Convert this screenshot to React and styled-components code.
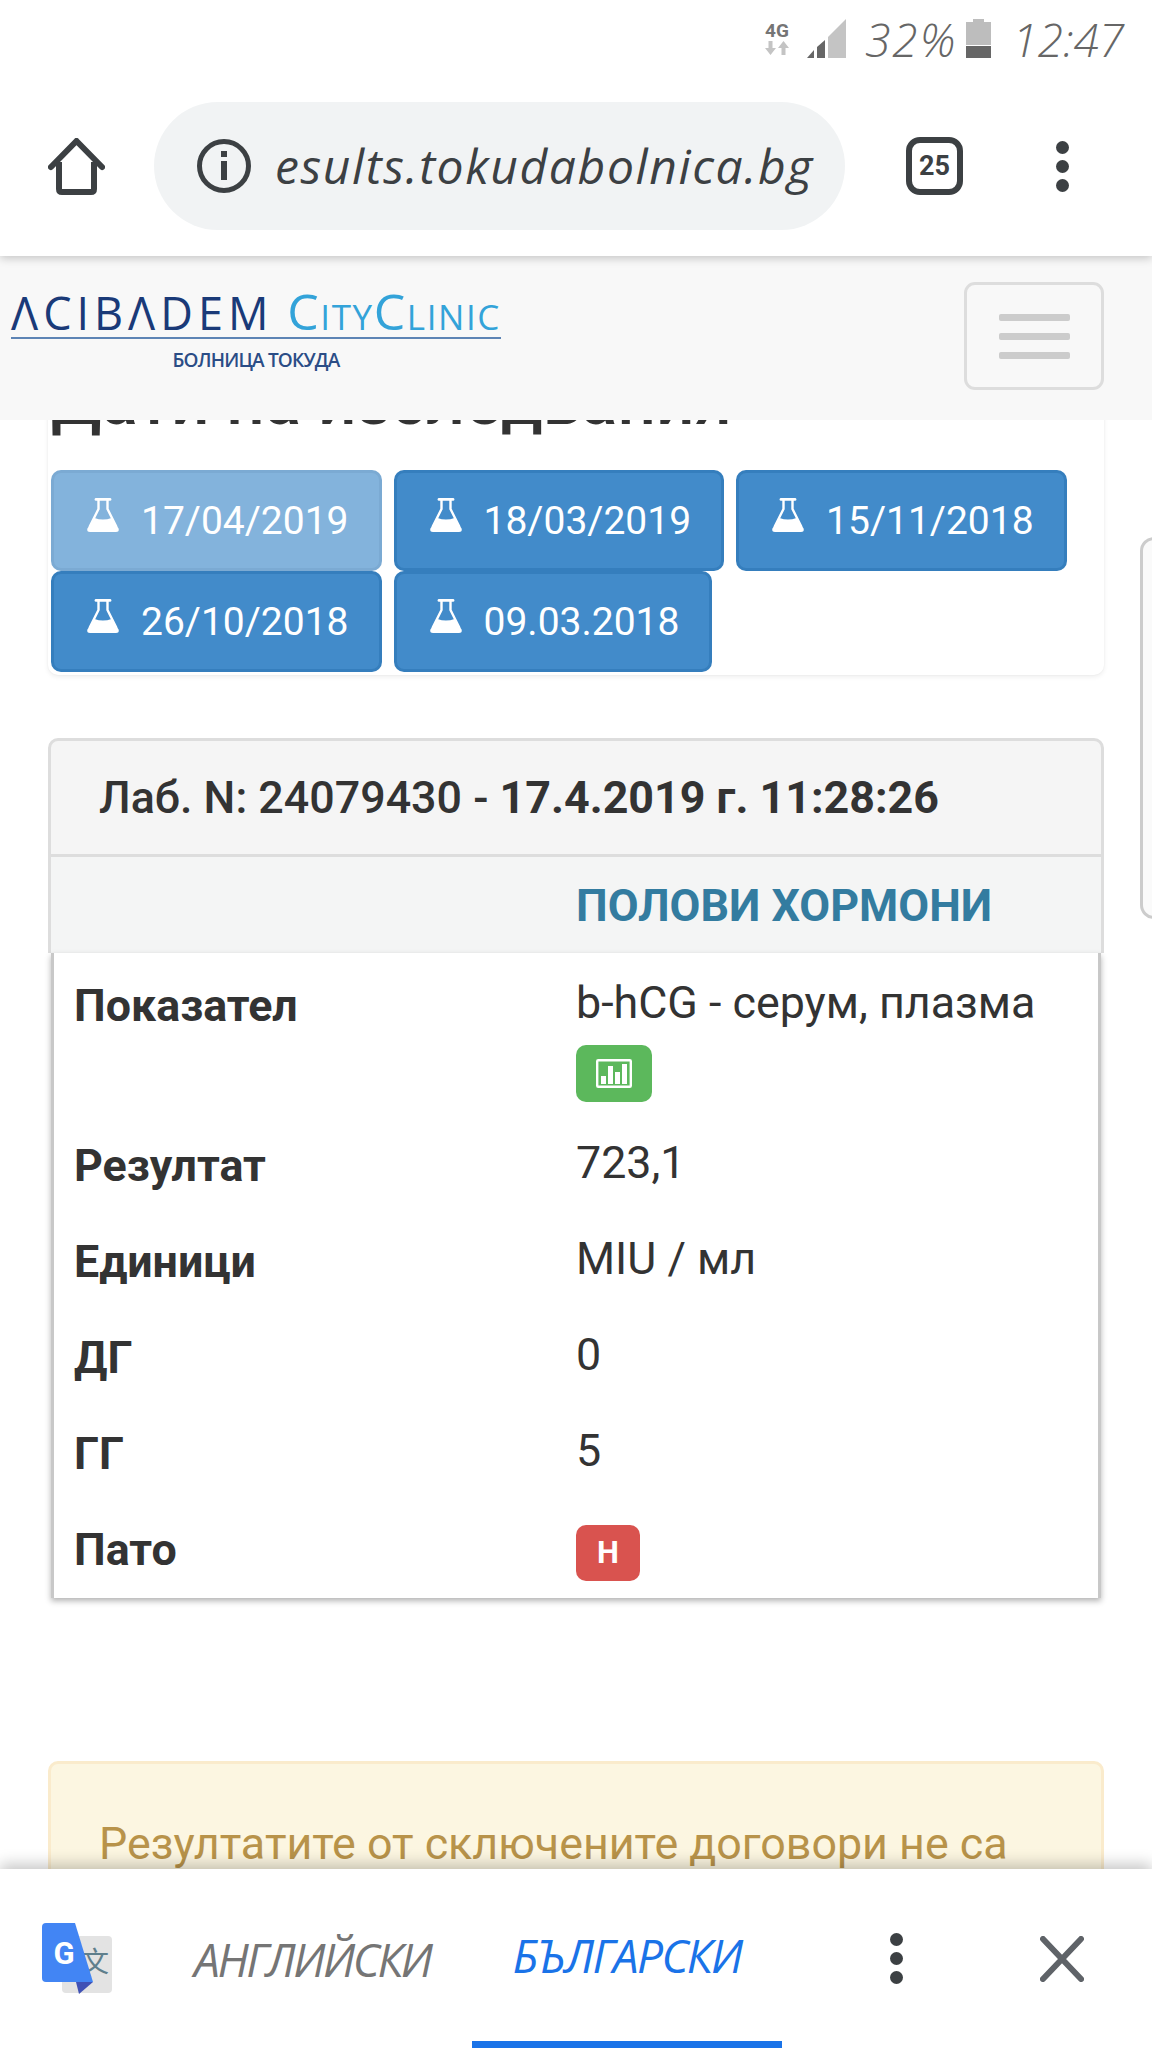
import React from "react";
import styled, { createGlobalStyle } from "styled-components";

const Global = createGlobalStyle`
  html, body { margin: 0; padding: 0; background: #fff; }
  * { box-sizing: border-box; }
`;

const Screen = styled.div`
  width: 1152px; height: 2048px; display: flex; flex-direction: column; overflow: hidden;
  font-family: Roboto, "Liberation Sans", sans-serif; color: #333; background: #fff;
`;
const Hand = `font-family: "Open Sans", "Noto Sans", sans-serif; font-style: italic;`;

const StatusBar = styled.div`
  height: 68px; flex: none; display: flex; align-items: flex-start; padding: 19px 0 0 762px; background: #fff; position: relative; z-index: 4;
`;
const NetBadge = styled.div`
  width: 30px; display: flex; flex-direction: column; align-items: center; color: #757575;
  font: 700 19px/20px Roboto, sans-serif; margin-top: 2px;
`;
const StatusText = styled.span`
  ${Hand} font-size: 46px; line-height: 40px; font-weight: 300; color: #666; letter-spacing: ${p => p.$ls || 0}px;
  margin-left: ${p => p.$ml}px; white-space: nowrap;
`;
const StatusIcon = styled.svg`
  flex: none; display: block; margin-left: ${p => p.$ml || 0}px;
`;

const Toolbar = styled.div`
  height: 188px; flex: none; display: flex; align-items: center; padding: 34px 0 26px 48px; background: #fff;
  position: relative; z-index: 3; box-shadow: 0 2px 9px rgba(0,0,0,.22);
`;
const UrlPill = styled.div`
  width: 691px; height: 128px; margin-left: 49px; flex: none; display: flex; align-items: center; gap: 24px; padding-left: 43px;
  border-radius: 64px; background: #f1f3f4; overflow: hidden;
`;
const UrlText = styled.span`
  ${Hand} font-size: 48px; font-weight: 400; color: #3c4043; white-space: nowrap; letter-spacing: 1.6px; line-height: 60px;
`;
const TabCount = styled.div`
  width: 57px; height: 58px; margin-left: 61px; flex: none; border: 6px solid #3c4043; border-radius: 14px;
  display: flex; align-items: center; justify-content: center; font: 700 27px/1 Roboto, sans-serif; color: #3c4043;
`;
const Dots = styled.div`
  width: 13px; margin-left: ${p => p.$ml}px; flex: none; display: flex; flex-direction: column; align-items: center; gap: 6px;
`;
const Dot = styled.span`
  width: 13px; height: 13px; border-radius: 50%; background: #3c4043;
`;

const Navbar = styled.div`
  height: 164px; flex: none; display: flex; justify-content: space-between; align-items: flex-start; padding: 26px 48px 0 11px;
  background: #f8f8f8; position: relative; z-index: 2;
`;
const Logo = styled.div`
  width: 490px; margin-top: 9px; display: flex; flex-direction: column; align-items: stretch;
`;
const LogoTop = styled.div`
  display: flex; align-items: baseline; justify-content: space-between; height: 48px; border-bottom: 2px solid #5d84b5;
`;
const LogoMain = styled.span`
  font: 500 45px/40px "Open Sans", sans-serif; letter-spacing: 5px; color: #1a3a78; white-space: nowrap;
`;
const LogoCity = styled.span`
  font: 400 50px/40px "Open Sans", sans-serif; font-variant: small-caps; color: #33a3d9; letter-spacing: 1.6px; white-space: nowrap;
`;
const LogoSub = styled.div`
  font: 600 19px/24px "Open Sans", sans-serif; color: #2b4d86; text-align: center; margin-top: 9px; letter-spacing: -0.8px;
`;
const Toggler = styled.div`
  width: 140px; height: 108px; border: 3px solid #ddd; border-radius: 11px; display: flex; flex-direction: column; align-items: center;
  justify-content: center; gap: 12px;
`;
const TogglerBar = styled.span`
  width: 71px; height: 7px; border-radius: 2px; background: #ccc;
`;

const Content = styled.div`
  flex: 1; min-height: 0; overflow: hidden; position: relative; padding: 0 48px;
`;
const PeekEdge = styled.div`
  position: absolute; top: 117px; right: -16px; width: 28px; height: 382px; border: 3px solid #ccc; border-radius: 16px; background: #fafafa;
`;
const DatesPanel = styled.section`
  margin-top: -55px; padding: 0 3px 3px; background: #fff; border-radius: 10px; box-shadow: 0 2px 5px rgba(0,0,0,.07), 0 0 2px rgba(0,0,0,.05);
`;
const Heading = styled.h3`
  margin: 0 0 33px; font: 500 67.5px/72px Roboto, sans-serif; color: #333; white-space: nowrap;
`;
const DateList = styled.div`
  display: flex; flex-wrap: wrap; column-gap: 12px;
`;
const DateButton = styled.div`
  height: 101px; padding: 0 30px 0 33px; display: flex; align-items: center; gap: 22px; color: #fff; font-size: 39px; border-radius: 10px;
  background: #428bca; border: 3px solid #357ebd; opacity: ${p => (p.$active ? 0.65 : 1)};
`;
const Card = styled.section`
  margin-top: 63px;
`;
const CardHeader = styled.div`
  height: 119px; padding: 0 48px; display: flex; align-items: center; background: #f5f5f5; border: 3px solid #ddd; border-radius: 10px 10px 0 0;
  font-size: 44.8px; font-weight: 500; color: #333; white-space: nowrap;
  b { font-weight: 700; margin-left: .25em; }
`;
const GroupHead = styled.div`
  height: 96px; padding: 0 0 0 525px; display: flex; align-items: center; background: #f4f5f5; border: solid #ddd; border-width: 0 3px;
  font-size: 44.8px; font-weight: 700; color: #337ca0;
`;
const ResultBody = styled.div`
  margin: 0 3px; padding: 5px 0 0 20px; background: #fff; border: solid #c8c8c8; border-width: 0 3px; box-shadow: 0 3px 6px rgba(0,0,0,.3);
`;
const ResultRow = styled.div`
  min-height: 96px; display: grid; grid-template-columns: 502px 1fr; align-items: start;
`;
const RowLabel = styled.div`
  padding-top: 20px; font-size: 44.8px; line-height: 56px; font-weight: 700; color: #333;
`;
const RowValue = styled.div`
  padding: 17px 0 16px; font-size: 44.8px; line-height: 56px; color: #333;
`;
const ChartButton = styled.div`
  width: 76px; height: 57px; margin-top: 14px; display: flex; align-items: center; justify-content: center; background: #5cb85c; border-radius: 10px;
`;
const FlagBadge = styled.div`
  width: 64px; height: 56px; margin-top: 6px; display: flex; align-items: center; justify-content: center; background: #d9534f; border-radius: 10px;
  color: #fff; font-size: 31px; font-weight: 700;
`;
const Warning = styled.div`
  margin-top: 163px; padding: 52px 48px 60px; background: #fcf6e1; border: 3px solid #faebcc; border-radius: 10px; color: #b8934a;
  font-size: 44.8px; line-height: 56px; white-space: nowrap;
`;

const TranslateBar = styled.div`
  height: 179px; flex: none; display: flex; align-items: center; padding-left: 42px; background: #fff; position: relative; z-index: 3;
  box-shadow: 0 -5px 14px rgba(0,0,0,.22);
`;
const LangLabel = styled.span`
  ${Hand} font-size: 46px; font-weight: 400; color: #757575; margin-left: 82px; width: 238px; white-space: nowrap; letter-spacing: -2.4px;
`;
const LangTab = styled.div`
  ${Hand} align-self: stretch; width: 310px; margin-left: 40px; display: flex; align-items: center; justify-content: center;
  border-bottom: 7px solid #1a73e8; font-size: 46px; font-weight: 500; color: #1a73e8; letter-spacing: -1.6px;
`;
const CloseIcon = styled.svg`
  margin-left: 137px; flex: none; display: block;
`;
const PlainIcon = styled.svg`
  flex: none; display: block;
`;
const FlaskIcon = styled.svg`
  flex: none; display: block; margin-bottom: 12px;
`;

const Flask = () => (
  <FlaskIcon width="32" height="34" viewBox="0 0 32 34">
    <path d="M9 1.4 H23" stroke="#fff" strokeWidth="2.8" strokeLinecap="round" fill="none" />
    <path d="M11.5 2 V11 L2.5 29" stroke="#fff" strokeWidth="2.4" fill="none" />
    <path d="M20.5 2 V11 L29.5 29" stroke="#fff" strokeWidth="2.4" fill="none" />
    <path d="M7.5 20 Q16 23 24.5 20 L31.6 30.5 Q32.5 34 29 34 H3 Q-.5 34 .4 30.5 Z" fill="#fff" />
  </FlaskIcon>
);

const dates = [
  ["17/04/2019", true],
  ["18/03/2019"],
  ["15/11/2018"],
  ["26/10/2018"],
  ["09.03.2018"],
];

const rows = [
  ["Резултат", "723,1"],
  ["Единици", "MIU / мл"],
  ["ДГ", "0"],
  ["ГГ", "5"],
];

export default function App() {
  return (
    <Screen>
      <Global />
      <StatusBar>
        <NetBadge>
          4G
          <StatusIcon width="24" height="14" viewBox="0 0 24 14">
            <path d="M3.5 0 H7.5 V7 H11 L5.5 14 L0 7 H3.5 Z" fill="#c4c4c4" />
            <path d="M16.5 14 H20.5 V7 H24 L18.5 0 L13 7 H16.5 Z" fill="#c4c4c4" />
          </StatusIcon>
        </NetBadge>
        <StatusIcon $ml={15} width="39" height="39" viewBox="0 0 39 39">
          <path d="M39 0 V39 H21 V18 Z" fill="#c4c4c4" />
          <path d="M18 21 V39 H10 V28 Z" fill="#666" />
          <path d="M7 31 V39 H0 Z" fill="#666" />
        </StatusIcon>
        <StatusText $ml={19} $ls={2}>32%</StatusText>
        <StatusIcon $ml={9} width="25" height="39" viewBox="0 0 25 39">
          <path d="M7 0 H18 V3 H25 V26 H0 V3 H7 Z" fill="#bdbdbd" />
          <rect y="27" width="25" height="12" fill="#666" />
        </StatusIcon>
        <StatusText $ml={21} $ls={0}>12:47</StatusText>
      </StatusBar>

      <Toolbar>
        <PlainIcon width="57" height="57" viewBox="0 0 57 57">
          <path d="M3 29 L28.5 3 L54 29" fill="none" stroke="#3c4043" strokeWidth="6" strokeLinecap="round" strokeLinejoin="round" />
          <path d="M11 24 V51 Q11 54 14 54 H43 Q46 54 46 51 V24" fill="none" stroke="#3c4043" strokeWidth="6" />
        </PlainIcon>
        <UrlPill>
          <PlainIcon width="54" height="56" viewBox="0 0 54 56">
            <circle cx="27" cy="28" r="24.5" fill="none" stroke="#3c4043" strokeWidth="5" />
            <rect x="24" y="13" width="6" height="6" fill="#3c4043" />
            <rect x="24" y="23" width="6" height="19" fill="#3c4043" />
          </PlainIcon>
          <UrlText>esults.tokudabolnica.bg</UrlText>
        </UrlPill>
        <TabCount>25</TabCount>
        <Dots $ml={93}><Dot /><Dot /><Dot /></Dots>
      </Toolbar>

      <Navbar>
        <Logo>
          <LogoTop>
            <LogoMain>ΛCIBΛDEM</LogoMain>
            <LogoCity>CityClinic</LogoCity>
          </LogoTop>
          <LogoSub>БОЛНИЦА ТОКУДА</LogoSub>
        </Logo>
        <Toggler><TogglerBar /><TogglerBar /><TogglerBar /></Toggler>
      </Navbar>

      <Content>
        <PeekEdge />
        <DatesPanel>
          <Heading>Дати на изследвания</Heading>
          <DateList>
            {dates.map(([d, active]) => (
              <DateButton key={d} $active={active}>
                <Flask />
                {d}
              </DateButton>
            ))}
          </DateList>
        </DatesPanel>

        <Card>
          <CardHeader>Лаб. N: 24079430 -<b>17.4.2019 г. 11:28:26</b></CardHeader>
          <GroupHead>ПОЛОВИ ХОРМОНИ</GroupHead>
          <ResultBody>
            <ResultRow>
              <RowLabel>Показател</RowLabel>
              <RowValue>
                b-hCG - серум, плазма
                <ChartButton>
                  <PlainIcon width="36" height="29" viewBox="0 0 36 29">
                    <rect x="1.2" y="1.2" width="33.6" height="26.6" rx="1" fill="none" stroke="#fff" strokeWidth="2.4" />
                    <rect x="5" y="17" width="5" height="8" fill="#fff" />
                    <rect x="12" y="7" width="5" height="18" fill="#fff" />
                    <rect x="19" y="13" width="5" height="12" fill="#fff" />
                    <rect x="26" y="5" width="5" height="20" fill="#fff" />
                  </PlainIcon>
                </ChartButton>
              </RowValue>
            </ResultRow>
            {rows.map(([k, v]) => (
              <ResultRow key={k}>
                <RowLabel>{k}</RowLabel>
                <RowValue>{v}</RowValue>
              </ResultRow>
            ))}
            <ResultRow>
              <RowLabel>Пато</RowLabel>
              <RowValue><FlagBadge>H</FlagBadge></RowValue>
            </ResultRow>
          </ResultBody>
        </Card>

        <Warning>Резултатите от сключените договори не са</Warning>
      </Content>

      <TranslateBar>
        <PlainIcon width="70" height="71" viewBox="0 0 70 71">
          <rect x="20" y="13" width="50" height="57" rx="4" fill="#e3e3e3" />
          <text x="53" y="49" fontSize="28" fontFamily="'Noto Sans CJK SC', sans-serif" fill="#5f7f8c" textAnchor="middle">文</text>
          <path d="M4 0 H33 L51 59 H4 Q0 59 0 55 V4 Q0 0 4 0 Z" fill="#4285f4" />
          <path d="M34 59 H51 L37 71 Z" fill="#3f51b5" />
          <text x="22" y="41" fontSize="31" fontWeight="700" fontFamily="Roboto, sans-serif" fill="#fff" textAnchor="middle">G</text>
        </PlainIcon>
        <LangLabel>АНГЛИЙСКИ</LangLabel>
        <LangTab>БЪЛГАРСКИ</LangTab>
        <Dots $ml={108}><Dot /><Dot /><Dot /></Dots>
        <CloseIcon width="44" height="46" viewBox="0 0 44 46">
          <path d="M3 3 L41 43 M41 3 L3 43" stroke="#5f6368" strokeWidth="6" strokeLinecap="round" />
        </CloseIcon>
      </TranslateBar>
    </Screen>
  );
}
